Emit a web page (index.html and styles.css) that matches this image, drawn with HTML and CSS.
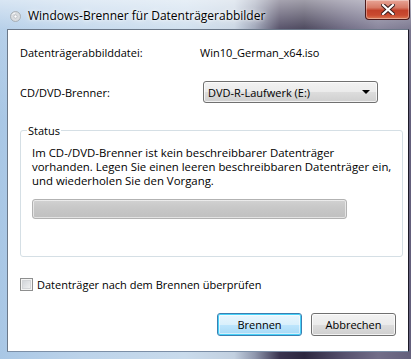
FILE: index.html
```html
<!DOCTYPE html>
<html lang="de">
<head>
  <meta charset="UTF-8">
  <title>Windows-Brenner für Datenträgerabbilder</title>
  <link rel="stylesheet" href="styles.css">
</head>
<body>
  <div class="window">
    <!-- Titelleiste -->
    <div class="titlebar">
      <svg class="app-icon" width="11" height="11" viewBox="0 0 11 11">
        <circle cx="5.5" cy="5.5" r="5" fill="#d9dcdf" stroke="#9ea4aa" stroke-width="0.8"/>
        <circle cx="5.5" cy="5.5" r="1.6" fill="#ffffff" stroke="#a5aab0" stroke-width="0.6"/>
        <path d="M2.5 3.5 A3.5 3.5 0 0 1 5 2.1" stroke="#ffffff" stroke-width="1" fill="none"/>
      </svg>
      <span class="title">Windows-Brenner für Datenträgerabbilder</span>
      <button class="close" title="Schließen">
        <svg width="14" height="11" viewBox="0 0 14 11">
          <path d="M2 1 L12 10 M12 1 L2 10" stroke="#3b1c1c" stroke-width="4.2" stroke-linecap="square"/>
          <path d="M2 1 L12 10 M12 1 L2 10" stroke="#ffffff" stroke-width="2.2" stroke-linecap="square"/>
        </svg>
      </button>
    </div>

    <!-- Inhalt -->
    <div class="client">
      <div class="row first">
        <span class="label">Datenträgerabbilddatei:</span>
        <span class="value">Win10_German_x64.iso</span>
      </div>
      <div class="row second">
        <span class="label">CD/DVD-Brenner:</span>
        <div class="combo">
          <span>DVD-R-Laufwerk (E:)</span>
          <span class="arrow"></span>
        </div>
      </div>

      <fieldset class="group">
        <legend>Status</legend>
        <p class="status-text">Im CD-/DVD-Brenner ist kein beschreibbarer Datenträger<br>vorhanden. Legen Sie einen leeren beschreibbaren Datenträger ein,<br>und wiederholen Sie den Vorgang.</p>
        <div class="progress"></div>
      </fieldset>

      <label class="check">
        <span class="box"></span>
        Datenträger nach dem Brennen überprüfen
      </label>

      <div class="buttons">
        <button class="btn default">Brennen</button>
        <button class="btn">Abbrechen</button>
      </div>
    </div>
  </div>
</body>
</html>
```

FILE: styles.css
```css
/* Grundlayout */
html, body {
  margin: 0;
  padding: 0;
  overflow: hidden;
}

body {
  width: 411px;
  height: 359px;
  font-family: "Open Sans", "Liberation Sans", Arial, sans-serif;
  font-size: 11px;
  color: #000;
}

/* Aero-Rahmen */
.window {
  width: 411px;
  height: 359px;
  display: flex;
  flex-direction: column;
  background:
    linear-gradient(180deg, rgba(255, 255, 255, 0.55) 0, rgba(255, 255, 255, 0.15) 30px, rgba(255, 255, 255, 0) 120px),
    linear-gradient(90deg, #a9c7e5 0, #bcd3ea 20%, #c9dbec 45%, #c2d0e0 57%, #8f97ad 62%, #3a3450 68%, #2c2740 74%, #57526f 84%, #726e89 92%, #64607c 100%);
}

.titlebar {
  height: 29px;
  display: flex;
  align-items: flex-start;
}

.app-icon {
  margin: 11px 0 0 10px;
}

.title {
  margin: 8px 0 0 7px;
  font-size: 12px;
  line-height: 15px;
  color: #000;
  text-shadow: 0 0 6px rgba(255, 255, 255, 0.9), 0 0 3px rgba(255, 255, 255, 0.9);
}

.close {
  margin-left: auto;
  margin-right: 1px;
  width: 45px;
  height: 20px;
  padding: 0;
  border: 1px solid #4a1a1a;
  border-top: none;
  border-radius: 0 0 4px 4px;
  background: linear-gradient(180deg, #e8a597 0, #d77a66 40%, #c2412a 55%, #c94a30 80%, #db7a55 100%);
  box-shadow: inset 0 0 0 1px rgba(255, 255, 255, 0.35);
  display: flex;
  justify-content: center;
  align-items: center;
}

/* Clientbereich */
.client {
  margin-left: 7px;
  width: 402px;
  height: 323px;
  box-sizing: border-box;
  border: 1px solid #6b7889;
  border-right-color: #1c1a28;
  border-bottom-color: #7b8ea6;
  background: #fff;
  padding: 15px 12px 0 12px;
}

.row {
  display: flex;
  align-items: center;
  line-height: 15px;
}

.label {
  width: 180px;
  flex: none;
}

.row.second {
  margin-top: 21px;
  height: 22px;
}

.combo {
  margin-left: 3px;
  width: 175px;
  height: 22px;
  box-sizing: border-box;
  border: 1px solid #707070;
  border-radius: 3px;
  background: linear-gradient(180deg, #f2f2f2 0, #ebebeb 50%, #dddddd 51%, #cfcfcf 100%);
  box-shadow: inset 0 0 0 1px rgba(255, 255, 255, 0.7);
  display: flex;
  align-items: center;
  padding: 0 7px 0 4px;
}

.combo .arrow {
  margin-left: auto;
  width: 0;
  height: 0;
  border-left: 4px solid transparent;
  border-right: 4px solid transparent;
  border-top: 4px solid #000;
}

/* Gruppenfeld */
.group {
  margin: 20px 0 0 0;
  padding: 8px 11px 37px 11px;
  border: 1px solid #d5dfe5;
  border-radius: 3px;
}

.group legend {
  margin-left: -5px;
  padding: 0 1px;
  line-height: 15px;
}

.status-text {
  margin: 0;
  font-size: 11.4px;
  line-height: 14px;
  white-space: nowrap;
}

.progress {
  margin-top: 11px;
  width: 315px;
  height: 20px;
  box-sizing: border-box;
  border: 1px solid #b2b2b2;
  border-radius: 3px;
  background: linear-gradient(180deg, #d2d2d2 0, #c8c8c8 40%, #c0c0c0 100%);
  box-shadow: inset 0 0 0 1px rgba(255, 255, 255, 0.55);
}

/* Kontrollkästchen */
.check {
  margin-top: 20px;
  display: flex;
  align-items: center;
  gap: 4px;
  line-height: 15px;
}

.check .box {
  width: 13px;
  height: 13px;
  box-sizing: border-box;
  border: 1px solid #8e8f8f;
  background: linear-gradient(135deg, #cbcfd5 0, #f6f6f6 100%);
  box-shadow: inset 0 0 0 1px #f4f4f4, inset 0 0 0 2px #d3d5d8;
}

/* Schaltflächen */
.buttons {
  margin-top: 21px;
  display: flex;
  justify-content: flex-end;
  gap: 9px;
}

.btn {
  width: 85px;
  height: 23px;
  padding: 0;
  font-family: inherit;
  font-size: 11px;
  color: #000;
  border: 1px solid #707070;
  border-radius: 3px;
  background: linear-gradient(180deg, #f2f2f2 0, #ebebeb 50%, #dddddd 51%, #cfcfcf 100%);
  box-shadow: inset 0 0 0 1px rgba(255, 255, 255, 0.75);
}

.btn.default {
  border-color: #3c7fb1;
  background: linear-gradient(180deg, #eaf6fd 0, #d9f0fc 50%, #bee6fd 51%, #a7d9f5 100%);
  box-shadow: inset 0 0 0 1px #48d2f9, inset 0 0 0 2px rgba(255, 255, 255, 0.5);
}
```
